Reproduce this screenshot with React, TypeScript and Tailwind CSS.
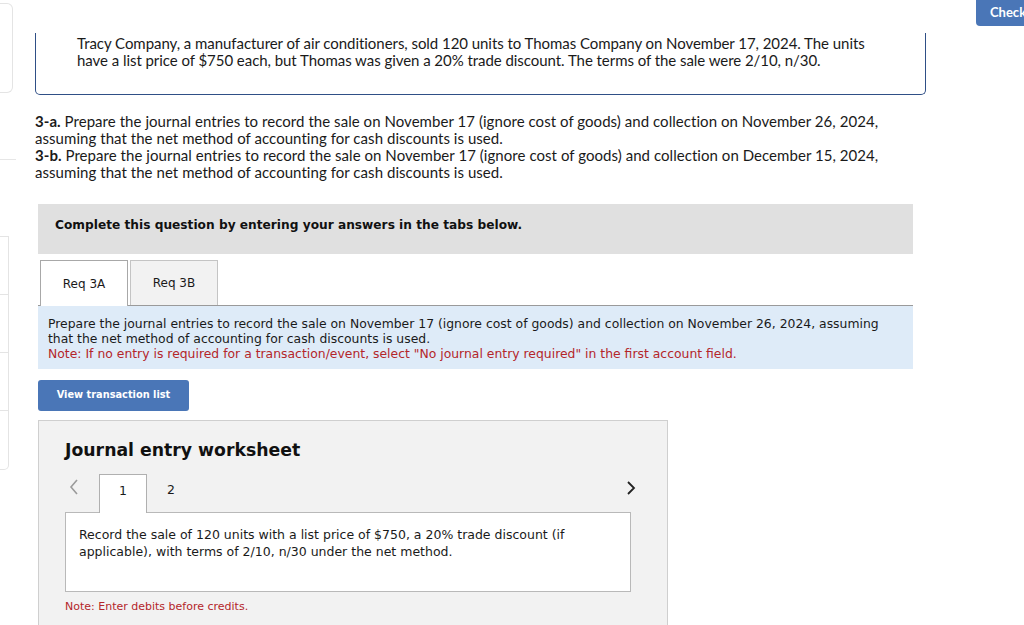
export default function App() {
  return (
    <div className="relative w-[1024px] h-[625px] overflow-hidden bg-white text-[#1a1a1a]">
      {/* sidebar remnants on the left edge */}
      <div className="absolute left-0 top-0 w-[13px] flex flex-col">
        <div className="mt-[3px] h-[90px] rounded-r-[6px] border border-l-0 border-[#e4e4e4]" />
        <div className="mt-[66px] h-px w-[16px] bg-[#e6e6e6]" />
        <div className="mt-[76px] w-[9px] flex flex-col rounded-br-[5px] border border-l-0 border-[#e4e4e4]">
          <div className="h-[58px] border-b border-[#e4e4e4]" />
          <div className="h-[58px] border-b border-[#e4e4e4]" />
          <div className="h-[58px] border-b border-[#e4e4e4]" />
          <div className="h-[58px]" />
        </div>
      </div>

      <button className="absolute right-[-20px] top-0 h-[26px] w-[68px] rounded-bl-[4px] bg-[#4a76b7] pl-[14px] text-left text-[13px] font-bold text-white font-['Lato',sans-serif]">
        Check
      </button>

      <div className="ml-[35px] w-[891px] pt-[33px]">
        <div className="h-[62px] rounded-b-[5px] border border-t-0 border-[#2f4f86] pl-[41px] pt-[2px] text-[15px] leading-[17px] tracking-[-0.05px] font-['Lato',sans-serif]">
          <p>
            Tracy Company, a manufacturer of air conditioners, sold 120 units to Thomas Company on November 17, 2024. The units
            <br />
            have a list price of $750 each, but Thomas was given a 20% trade discount. The terms of the sale were 2/10, n/30.
          </p>
        </div>

        <div className="mt-[18px] text-[15px] leading-[17px] tracking-[0.05px] font-['Lato',sans-serif]">
          <p>
            <b>3-a.</b> Prepare the journal entries to record the sale on November 17 (ignore cost of goods) and collection on November 26, 2024,
            <br />
            assuming that the net method of accounting for cash discounts is used.
          </p>
          <p>
            <b>3-b.</b> Prepare the journal entries to record the sale on November 17 (ignore cost of goods) and collection on December 15, 2024,
            <br />
            assuming that the net method of accounting for cash discounts is used.
          </p>
        </div>
      </div>

      <div className="ml-[38px] w-[875px] font-['DejaVu_Sans',Verdana,sans-serif]">
        <div className="mt-[23px] h-[50px] bg-[#e0e0e0] pl-[17px] pt-[13px] text-[12.2px] font-bold leading-[16px] text-[#111]">
          Complete this question by entering your answers in the tabs below.
        </div>

        <div className="mt-[7px] flex h-[45px] items-end border-b border-[#9a9a9a]">
          <div className="ml-[2px] mb-[-1px] flex h-[46px] w-[88px] items-center justify-center border border-b-0 border-[#a8a8a8] bg-white text-[12px]">
            Req 3A
          </div>
          <div className="ml-[2px] flex h-[45px] w-[88px] items-center justify-center border border-b-0 border-[#c4c4c4] bg-[#f2f2f2] text-[12px]">
            Req 3B
          </div>
        </div>

        <div className="h-[63px] bg-[#deebf8] pl-[10px] pt-[10px] text-[12.4px] leading-[15px]">
          <p>
            Prepare the journal entries to record the sale on November 17 (ignore cost of goods) and collection on November 26, 2024, assuming
            <br />
            that the net method of accounting for cash discounts is used.
          </p>
          <p className="text-[#b4262a]">
            Note: If no entry is required for a transaction/event, select "No journal entry required" in the first account field.
          </p>
        </div>

        <button className="mt-[11px] flex h-[31px] w-[151px] items-center justify-center rounded-[3px] bg-[#4a76b7] text-[9.8px] font-bold text-white">
          View transaction list
        </button>

        <div className="mt-[9px] h-[220px] w-[630px] border border-[#cfcfcf] bg-[#f2f2f2] px-[26px] pt-[17px]">
          <h2 className="text-[17.3px] font-bold leading-[24px] text-[#111]">Journal entry worksheet</h2>

          <div className="relative mt-[12px] flex h-[38px] items-end">
            <span className="absolute left-[3px] top-[4px] text-[#9b9b9b]">
              <svg width="12" height="18" viewBox="0 0 12 18" fill="none" stroke="currentColor" strokeWidth="1.6">
                <path d="M9 2 L3 9 L9 16" />
              </svg>
            </span>
            <div className="ml-[34px] mb-[-1px] flex h-[39px] w-[48px] items-center justify-center border border-b-0 border-[#b0b0b0] bg-white pb-[6px] text-[12.5px]">
              1
            </div>
            <div className="flex h-[38px] w-[48px] items-center justify-center pb-[6px] text-[12.5px]">2</div>
            <span className="absolute left-[560px] top-[6px] text-[#222]">
              <svg width="12" height="16" viewBox="0 0 12 16" fill="none" stroke="currentColor" strokeWidth="1.8">
                <path d="M3 2 L9 8 L3 14" />
              </svg>
            </span>
          </div>

          <div className="h-[80px] w-[566px] border border-[#b9b9b9] bg-white pl-[13px] pt-[13px] text-[12.5px] leading-[17px]">
            <p>
              Record the sale of 120 units with a list price of $750, a 20% trade discount (if
              <br />
              applicable), with terms of 2/10, n/30 under the net method.
            </p>
          </div>

          <p className="mt-[7px] text-[11px] leading-[15px] text-[#b4262a]">Note: Enter debits before credits.</p>
        </div>
      </div>
    </div>
  );
}
